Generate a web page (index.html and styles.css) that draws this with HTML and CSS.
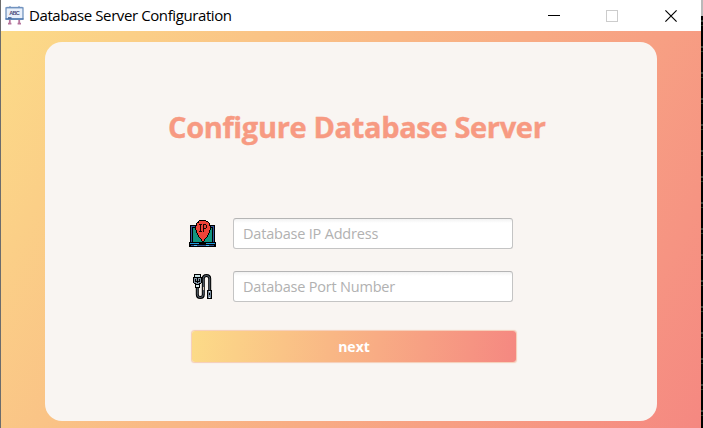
FILE: index.html
```
<!DOCTYPE html>
<html lang="en">
<head>
<meta charset="utf-8">
<title>Database Server Configuration</title>
<link rel="stylesheet" href="styles.css">
</head>
<body>
<div class="desktop">
  <div class="window">
    <header class="titlebar">
      <svg class="app-icon" width="20" height="20" viewBox="0 0 20 20">
        <path d="M4.8 14v4M3 17.7h3.4M14.2 14v4M12.6 17.7h3.4" stroke="#b5759c" stroke-width="1.8"/>
        <path d="M1.5 1.3h16M4 .8h2M13 .8h2" stroke="#8aa6cb" stroke-width="1"/>
        <rect x="1" y="1.8" width="17" height="11.4" fill="#e9f0fb" stroke="#5c83b5" stroke-width="1.1"/>
        <path d="M.5 12.9h18" stroke="#4a76ae" stroke-width="1.3"/>
        <path d="M3 11.9h3.5" stroke="#33548c" stroke-width="1.3"/>
        <text class="app-icon-text" x="9.5" y="9" text-anchor="middle" textLength="10.5">ABC</text>
      </svg>
      <h1 class="caption">Database Server Configuration</h1>
      <div class="controls">
        <svg width="12" height="12" shape-rendering="crispEdges"><path d="M0 5.5h12" stroke="#000"/></svg>
        <svg width="12" height="12" shape-rendering="crispEdges"><rect x=".5" y=".5" width="11" height="11" fill="none" stroke="#ccc"/></svg>
        <svg width="12" height="12"><path d="M.4.4l11.2 11.2M11.6.4L.4 11.6" stroke="#000" stroke-width="1.15"/></svg>
      </div>
    </header>
    <main class="content">
      <section class="card">
        <h2 class="title">Configure Database Server</h2>
        <form class="form">
          <div class="row">
            <svg class="row-icon" width="27" height="27" viewBox="0 0 27 27" shape-rendering="crispEdges">
              <rect x="1" y="5" width="25" height="18" fill="#000"/>
              <rect x="2" y="6" width="23" height="17" fill="#35549b"/>
              <rect x="3" y="7" width="21" height="16" fill="#000"/>
              <rect x="4" y="8" width="19" height="14" fill="#13967f"/>
              <rect x="0" y="22" width="27" height="5" fill="#000"/>
              <path d="M1 23.5h9M17 23.5h9" stroke="#2299dd"/>
              <path d="M2 25.5h23" stroke="#284f8c"/>
              <path d="M5 25.5h3M17 25.5h3" stroke="#4dbdf2"/>
              <path d="M10 0h7v1h2v1h1v1h1v3h1v4h-1v3h-1v2h-1v2h-1v1h-1v1h-1v2h-1v1h-2v-1h-1v-2h-1v-1h-1v-1H9v-2H8v-2H7v-3H6V6h1V3h1V2h1V1h1z" fill="#000"/>
              <path d="M10 1h7v1h2v1h1v3h1v4h-1v3h-1v2h-1v2h-1v1h-1v1h-1v2h-2v-2h-1v-1h-1v-1h-1v-2H9v-2H8v-3H7V6h1V3h2z" fill="#ee4338"/>
              <path d="M10 4.5h3M10 11.5h3M11.5 4v8M14.5 4v8M14 4.5h3M17.5 5v3M14 8.5h3" stroke="#180504" fill="none"/>
            </svg>
            <input class="field" type="text" placeholder="Database IP Address">
          </div>
          <div class="row">
            <svg class="row-icon" width="27" height="27" viewBox="-3 -1 27 27">
              <path d="M5.3 12v8.5q0 3 3 3t3-3V4.5q0-3 3.2-3t3.2 3V17" fill="none" stroke="#000" stroke-width="3"/>
              <path d="M5.3 12v8.5q0 3 3 3t3-3V4.5q0-3 3.2-3t3.2 3V17" fill="none" stroke="#667482" stroke-width=".9"/>
              <g shape-rendering="crispEdges">
                <path d="M2 0h7v3h1v6H9v1H8v4H3v-4H2V9H1V3h1z" fill="#000"/>
                <rect x="3" y="1" width="5" height="2" fill="#c6e2e6"/>
                <path d="M2 4h7v5H7v1H4V9H2z" fill="#8495a5"/>
                <path d="M5.5 4v5M3.5 5v2h4V5" stroke="#000" fill="none"/>
                <rect x="4" y="11" width="3" height="2" fill="#d6e7e9"/>
                <rect x="15" y="16" width="5" height="9" fill="#000"/>
                <rect x="16" y="17" width="3" height="7" fill="#77899b"/>
                <path d="M17.5 17v1M17.5 23v1" stroke="#edf3f5"/>
                <path d="M17.5 19v2" stroke="#000"/>
                <path d="M11.5 13v3" stroke="#d6c4b7"/>
              </g>
            </svg>
            <input class="field" type="text" placeholder="Database Port Number">
          </div>
          <button class="next" type="button">next</button>
        </form>
      </section>
    </main>
  </div>
  <aside class="backdrop"></aside>
</div>
</body>
</html>
```
FILE: styles.css
```
* { box-sizing: border-box; }
body {
  margin: 0;
  font-family: "Open Sans", "Noto Sans", sans-serif;
  overflow: hidden;
}
.desktop {
  display: flex;
  width: 703px;
  height: 428px;
  background: #fff;
}
.window {
  display: flex;
  flex-direction: column;
  width: 701px;
  border-left: 1px solid #6c6c6c;
}
.backdrop {
  width: 2px;
  background:
    linear-gradient(#b9b9b9 16px, transparent 16px),
    repeating-linear-gradient(transparent 0 20px, #35423a 20px 22px, transparent 22px 25px, #243b2a 25px 26px),
    #000;
}
.titlebar {
  display: flex;
  align-items: center;
  height: 31px;
  padding-left: 4px;
  background: #fff;
}
.app-icon { flex: none; }
.app-icon-text {
  font: bold 5.5px "Liberation Sans", sans-serif;
  fill: #4a4a78;
}
.caption {
  margin: 0 0 2px 4px;
  font-size: 15px;
  line-height: 20px;
  font-weight: 400;
  letter-spacing: -0.4px;
  color: #000;
  white-space: nowrap;
}
.controls {
  display: flex;
  gap: 47px;
  margin-left: auto;
  padding-right: 24px;
}
.controls svg:first-child { margin-right: -1px; }
.content {
  flex: 1;
  padding: 11px 44px 7px;
  background: linear-gradient(119.6deg, #fcdb88, #f58881);
}
.card {
  height: 379px;
  padding-top: 63px;
  border-radius: 17px;
  background: #f9f5f2;
}
.title {
  margin: 0 0 0 123px;
  font-size: 29px;
  line-height: 44px;
  font-weight: 700;
  letter-spacing: -0.34px;
  color: #f79a82;
  -webkit-text-stroke: 0.4px #f79a82;
  white-space: nowrap;
}
.form {
  display: flex;
  flex-direction: column;
  gap: 22px;
  margin: 69px 0 0 144px;
}
.row {
  display: flex;
  align-items: center;
  gap: 17px;
  height: 31px;
}
.row-icon { flex: none; }
.field {
  width: 280px;
  height: 31px;
  padding: 0 9px;
  border: 1px solid #c4c4c4;
  border-top-color: #b5b5b5;
  border-radius: 3px;
  background: linear-gradient(#f2f2f2, #fff 4px);
  font: 14.5px "Open Sans", "Noto Sans", sans-serif;
  letter-spacing: -0.2px;
}
.field::placeholder { color: #b1b1b1; opacity: 1; }
.next {
  width: 324px;
  height: 31px;
  margin: 7px 0 0 3px;
  padding: 0;
  border: 0;
  border-radius: 3px;
  background: linear-gradient(95.5deg, #fcdb88, #f58881);
  box-shadow: 0 0 1px 0.5px #f5cdb5;
  font: bold 14px/31px "Open Sans", "Noto Sans", sans-serif;
  color: #fff;
}
```
